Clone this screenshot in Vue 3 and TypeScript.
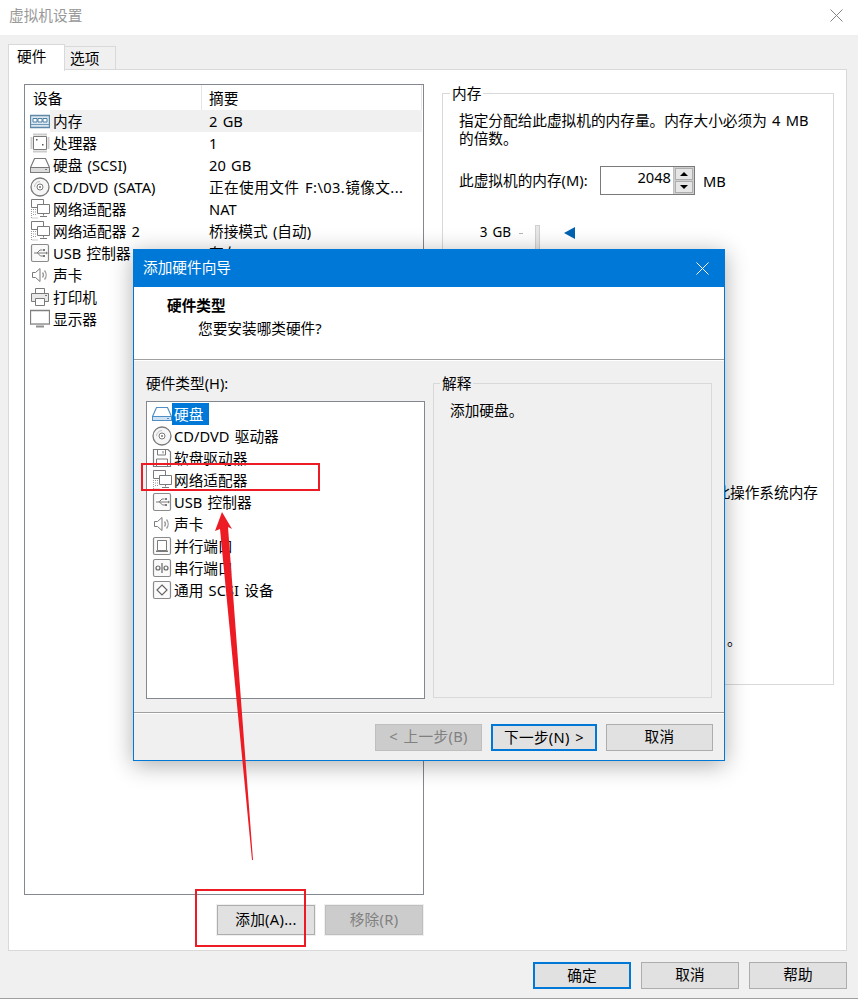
<script setup lang="ts">
interface Shape { d: string; s?: string; f?: string; w?: number; da?: string }

const G = '#7a7a7a'
const L = '#999999'
const frame = 'M3 1.500h14a1.500 1.500 0 0 1 1.500 1.500v14a1.500 1.500 0 0 1-1.500 1.500H3A1.500 1.500 0 0 1 1.500 17V3A1.500 1.500 0 0 1 3 1.500z'
const icons: Record<string, Shape[]> = {
  mem: [
    { d: 'M.5 4.500h19v12h-19z', s: '#5f87a6', f: '#dbe7f1', w: 1.300 },
    { d: 'M3 7.500h4v3.500H3zM8 7.500h4v3.500H8zM13 7.500h4v3.500h-4z', s: '#4f7fa3', f: '#ffffff' },
    { d: 'M1 13.500h18', s: '#6f97b6' }
  ],
  cpu: [
    { d: 'M3.500 3.500h13v13h-13z', s: G, f: '#fff' },
    { d: 'M4 .5v2M6 .5v2M8 .5v2M10 .5v2M12 .5v2M14 .5v2M16 .5v2M4 17.500v2M6 17.500v2M8 17.500v2M10 17.500v2M12 17.500v2M14 17.500v2M16 17.500v2M.5 5h2M.5 7h2M.5 9h2M.5 11h2M.5 13h2M.5 15h2M17.500 5h2M17.500 7h2M17.500 9h2M17.500 11h2M17.500 13h2M17.500 15h2', s: L },
    { d: 'M6 6h1.500v1.500H6zM12 11h1.500v1.500H12z', f: '#555' }
  ],
  hdd: [
    { d: 'M4.500 3.500h11l4 9v5h-19v-5z', s: G, f: '#fff', w: 1.200 },
    { d: 'M.5 12.500h19', s: G },
    { d: 'M1 13h18v4H1z', f: '#dcdcdc' },
    { d: 'M15 14.500h2', s: G }
  ],
  hddBlue: [
    { d: 'M4.500 3.500h11l4 9v4h-19v-4z', s: '#4f8fc4', f: '#fff', w: 1.200 },
    { d: 'M.5 12.500h19', s: '#4f8fc4' },
    { d: 'M1 13h18v3H1z', f: '#cfe2f3' },
    { d: 'M15 14.500h2', s: '#4f8fc4' }
  ],
  cd: [
    { d: 'M10 1a9 9 0 1 0 0 18a9 9 0 1 0 0-18z', s: G, f: '#f6f6f6', w: 1.300 },
    { d: 'M10 7a3 3 0 1 0 0 6a3 3 0 1 0 0-6z', s: G, f: '#fff' },
    { d: 'M10 9a1 1 0 1 0 0 2a1 1 0 1 0 0-2z', f: '#777' },
    { d: 'M4.500 10a5.500 5.500 0 0 1 5.500-5.500', s: '#c4c4c4' }
  ],
  net: [
    { d: 'M1.500 .5h12v8h-12z', s: G, f: '#fff' },
    { d: 'M7.500 5.500h12v9h-12z', s: G, f: '#fff' },
    { d: 'M13.500 14.500v2M10 17.500h7', s: G },
    { d: 'M1.500 10v9h7M3 10.500h3M3 13h3M3 15.500h3', s: L, da: '1 1' }
  ],
  usb: [
    { d: frame, s: '#8a8a8a', f: '#fafafa', w: 1.200 },
    { d: 'M4 10h12M7 10l3-3h2.500M7.500 10l3 3h2.500', s: G },
    { d: 'M13 6h2v2h-2zM13 12h2v2h-2z', f: G },
    { d: 'M16 8.500l2 1.500-2 1.500z', f: G }
  ],
  sound: [
    { d: 'M2.500 7.500h3l4.500-4v13l-4.500-4h-3z', s: G, f: '#fff' },
    { d: 'M12.500 7.500a4 4 0 0 1 0 5M14.500 5.500a7 7 0 0 1 0 9', s: L, w: 1.300 }
  ],
  printer: [
    { d: 'M5.500 1.500h9v5h-9z', s: G, f: '#fff' },
    { d: 'M1.500 6.500h17v8h-17z', s: G, f: '#e9e9e9' },
    { d: 'M5.500 11.500h9v7h-9z', s: G, f: '#fff' },
    { d: 'M15 8.500h2', s: G }
  ],
  monitor: [
    { d: 'M.5 1.500h19v13.500H.5z', s: '#808080', f: '#fff', w: 1.300 },
    { d: 'M1 14h18v1.500H1z', f: '#b0b0b0' },
    { d: 'M6 17.500h8', s: '#909090', w: 2 }
  ],
  floppy: [
    { d: 'M1.500 1.500h14.500l2.500 2.500v14.500h-17z', s: G, f: '#fff', w: 1.200 },
    { d: 'M5.500 1.500v5.500h8v-5.500M11 3v2.500', s: G },
    { d: 'M4.500 18.500v-7.500h11v7.500', s: G }
  ],
  parallel: [
    { d: frame, s: '#8a8a8a', f: '#fafafa', w: 1.200 },
    { d: 'M5.500 4.500h9v10h-9z', s: G, f: '#fff' },
    { d: 'M4 14.500h12v1.500H4z', f: G }
  ],
  serial: [
    { d: frame, s: '#8a8a8a', f: '#fafafa', w: 1.200 },
    { d: 'M6 8a2 2 0 1 0 0 4a2 2 0 1 0 0-4zM14 8a2 2 0 1 0 0 4a2 2 0 1 0 0-4zM10 5v10', s: '#666', w: 1.200 }
  ],
  scsi: [
    { d: frame, s: '#8a8a8a', f: '#fafafa', w: 1.200 },
    { d: 'M10 5l5 5-5 5-5-5z', s: '#666', f: '#fff', w: 1.200 }
  ]
}

const devices = [
  { icon: 'mem', name: '内存', summary: '2 GB', selected: true },
  { icon: 'cpu', name: '处理器', summary: '1' },
  { icon: 'hdd', name: '硬盘 (SCSI)', summary: '20 GB' },
  { icon: 'cd', name: 'CD/DVD (SATA)', summary: '正在使用文件 F:\\03.镜像文...', long: true },
  { icon: 'net', name: '网络适配器', summary: 'NAT' },
  { icon: 'net', name: '网络适配器 2', summary: '桥接模式 (自动)' },
  { icon: 'usb', name: 'USB 控制器', summary: '存在' },
  { icon: 'sound', name: '声卡', summary: '自动检测' },
  { icon: 'printer', name: '打印机', summary: '存在' },
  { icon: 'monitor', name: '显示器', summary: '自动检测' }
]

const hardware = [
  { icon: 'hddBlue', name: '硬盘', selected: true },
  { icon: 'cd', name: 'CD/DVD 驱动器' },
  { icon: 'floppy', name: '软盘驱动器' },
  { icon: 'net', name: '网络适配器' },
  { icon: 'usb', name: 'USB 控制器' },
  { icon: 'sound', name: '声卡' },
  { icon: 'parallel', name: '并行端口' },
  { icon: 'serial', name: '串行端口' },
  { icon: 'scsi', name: '通用 SCSI 设备' }
]
</script>

<template>
  <div class="app">
    <header class="title">
      <span>虚拟机设置</span>
      <svg class="close" width="13" height="13" viewBox="0 0 13 13"><path d="M.5.500l12 12M12.500.500l-12 12" stroke="#858585" fill="none" /></svg>
    </header>

    <main class="body">
      <div class="tabs">
        <div class="tab active">硬件</div>
        <div class="tab">选项</div>
      </div>

      <section class="panel">
        <div class="left">
          <div class="list">
            <div class="list-head">
              <div class="head-a">设备</div>
              <div class="head-b">摘要</div>
            </div>
            <div v-for="d in devices" :key="d.name" class="dev-row">
              <svg class="icon" width="20" height="20" viewBox="0 0 20 20">
                <path v-for="(p, i) in icons[d.icon]" :key="i" :d="p.d" :stroke="p.s || 'none'" :fill="p.f || 'none'" :stroke-width="p.w || 1" :stroke-dasharray="p.da" />
              </svg>
              <div class="cells" :class="{ sel: d.selected }">
                <span class="dev-name">{{ d.name }}</span>
                <span :class="{ long: d.long }">{{ d.summary }}</span>
              </div>
            </div>
          </div>
          <div class="list-btns">
            <button class="btn add">添加(A)...</button>
            <button class="btn remove" disabled>移除(R)</button>
          </div>
        </div>

        <div class="right">
          <div class="group">
            <div class="legend">内存</div>
            <p class="intro">指定分配给此虚拟机的内存量。内存大小必须为 4 MB 的倍数。</p>
            <div class="spin-row">
              <span class="spin-label">此虚拟机的内存(M):</span>
              <div class="spin">
                <span class="spin-val">2048</span>
                <div class="spin-btns">
                  <div class="spin-btn"><i class="tri up"></i></div>
                  <div class="spin-btn"><i class="tri down"></i></div>
                </div>
              </div>
              <span class="unit">MB</span>
            </div>
            <div class="slider-row">
              <span class="gb">3 GB</span>
              <i class="tick"></i>
              <i class="track"></i>
              <i class="marker"></i>
            </div>
            <div class="note">此操作系统内存</div>
            <div class="dot">。</div>
          </div>
        </div>
      </section>

      <footer class="foot">
        <button class="btn wide primary">确定</button>
        <button class="btn wide">取消</button>
        <button class="btn wide">帮助</button>
      </footer>
    </main>

    <div class="dialog">
      <div class="d-title">
        <span>添加硬件向导</span>
        <svg width="13" height="13" viewBox="0 0 13 13"><path d="M.5.500l12 12M12.500.500l-12 12" stroke="#fff" fill="none" /></svg>
      </div>
      <div class="d-head">
        <div class="d-h1">硬件类型</div>
        <div class="d-h2">您要安装哪类硬件?</div>
      </div>
      <div class="d-main">
        <div class="d-left">
          <div class="d-label">硬件类型(H):</div>
          <div class="d-list">
            <div v-for="h in hardware" :key="h.name" class="hw-row">
              <svg class="icon" width="20" height="20" viewBox="0 0 20 20">
                <path v-for="(p, i) in icons[h.icon]" :key="i" :d="p.d" :stroke="p.s || 'none'" :fill="p.f || 'none'" :stroke-width="p.w || 1" :stroke-dasharray="p.da" />
              </svg>
              <span class="hw-name" :class="{ on: h.selected }">{{ h.name }}</span>
            </div>
          </div>
        </div>
        <div class="d-explain">
          <div class="d-legend">解释</div>
          <div class="d-text">添加硬盘。</div>
        </div>
      </div>
      <div class="d-foot">
        <button class="btn d-btn remove" disabled>&lt; 上一步(B)</button>
        <button class="btn d-btn next primary">下一步(N) &gt;</button>
        <button class="btn d-btn">取消</button>
      </div>
    </div>

    <svg class="marks" width="858" height="999" viewBox="0 0 858 999">
      <rect x="142" y="464" width="177" height="26" fill="none" stroke="#ed1c24" stroke-width="2" />
      <rect x="196" y="890" width="109" height="56" fill="none" stroke="#ed1c24" stroke-width="2" />
      <path d="M222 512L232 529L228 527L253 860L252 860L220 529L215 531Z" fill="#ed1c24" />
    </svg>
  </div>
</template>

<style scoped>
.app {
  position: relative;
  width: 858px;
  height: 999px;
  overflow: hidden;
  display: flex;
  flex-direction: column;
  box-sizing: border-box;
  border-bottom: 1px solid #a0a0a0;
  background: #f0f0f0;
  font-family: "Noto Sans", "Noto Sans CJK SC", sans-serif;
  font-size: 14.67px;
  line-height: 22px;
  word-spacing: 1.500px;
  color: #000;
}
.title {
  height: 35px;
  flex: none;
  background: #fff;
  padding: 0 15px 0 9px;
  display: flex;
  align-items: center;
  justify-content: space-between;
  color: #999;
}
.close { margin-top: -5px; }
.title span { margin-top: -6px; }
.body {
  flex: 1;
  padding: 9px 11px 0 8px;
  display: flex;
  flex-direction: column;
}
.tabs {
  height: 25px;
  display: flex;
  align-items: flex-start;
  flex: none;
}
.tab {
  box-sizing: border-box;
  height: 24px;
  width: 51px;
  margin-top: 2px;
  padding-left: 5px;
  border: 1px solid #d9d9d9;
  border-left: none;
  line-height: 22px;
}
.tab.active {
  position: relative;
  z-index: 1;
  height: 27px;
  width: 57px;
  margin-top: 0;
  padding-left: 8px;
  background: #fff;
  border-left: 1px solid #d9d9d9;
  border-bottom: none;
}
.panel {
  box-sizing: border-box;
  height: 882px;
  flex: none;
  display: flex;
  background: #fff;
  border: 1px solid #d9d9d9;
  padding: 14px 13px 15px 15px;
}
.left {
  width: 400px;
  flex: none;
  display: flex;
  flex-direction: column;
}
.list {
  flex: 1;
  border: 1px solid #828790;
  padding-right: 1px;
}
.list-head {
  display: flex;
  height: 25px;
  line-height: 26px;
}
.head-a {
  width: 177px;
  box-sizing: border-box;
  padding-left: 8px;
  border-right: 1px solid #e5e5e5;
}
.head-b {
  flex: 1;
  padding-left: 7px;
  border-right: 1px solid #e5e5e5;
}
.dev-row {
  display: flex;
  align-items: center;
  height: 22px;
  padding-left: 5px;
}
.icon { flex: none; }
.cells {
  flex: 1;
  display: flex;
  height: 22px;
  padding-left: 3px;
}
.cells.sel { background: #f0f0f0; }
.dev-name { width: 156px; flex: none; }
.long { letter-spacing: 0.400px; }
.list-btns {
  display: flex;
  justify-content: flex-end;
  gap: 10px;
  margin-top: 10px;
  padding-right: 1px;
  flex: none;
}
.btn {
  box-sizing: border-box;
  font: inherit;
  word-spacing: inherit;
  color: #000;
  background: #e1e1e1;
  border: 1px solid #adadad;
  padding: 0 0 3px;
  display: block;
}
.btn.primary { border: 2px solid #0078d7; }
.btn.remove {
  background: #cccccc;
  color: #808080;
  border-color: #bfbfbf;
}
.add, .list-btns .remove {
  width: 98px;
  height: 30px;
  box-shadow: 0 0 0 1px #f0f0f0;
  letter-spacing: 0.300px;
}
.right {
  flex: 1;
  margin-left: 18px;
  padding-top: 9px;
}
.group {
  box-sizing: border-box;
  height: 592px;
  width: 392px;
  border: 1px solid #d9d9d9;
  padding: 0 15px 0 16px;
}
.legend {
  width: fit-content;
  margin: -10px 0 0 -9px;
  padding: 0 2px;
  background: #fff;
  height: 18px;
  line-height: 18px;
}
.intro {
  margin: 9px 0 0;
  width: 360px;
  line-height: 18px;
}
.spin-row {
  display: flex;
  align-items: center;
  height: 29px;
  margin-top: 19px;
}
.spin-label { width: 141px; flex: none; padding-bottom: 2px; }
.spin {
  box-sizing: border-box;
  width: 95px;
  height: 29px;
  display: flex;
  border: 1px solid #7a7a7a;
}
.spin-val {
  flex: 1;
  text-align: right;
  padding-right: 2px;
  line-height: 21px;
}
.spin-btns {
  width: 21px;
  display: flex;
  flex-direction: column;
  gap: 1px;
  background: #cfcfcf;
  padding: 1px;
  box-sizing: border-box;
  border-left: 1px solid #c0c0c0;
}
.spin-btn {
  flex: 1;
  background: #e6e6e6;
  border: 1px solid #adadad;
  display: flex;
  align-items: center;
  justify-content: center;
}
.tri {
  width: 0;
  height: 0;
  border-left: 4px solid transparent;
  border-right: 4px solid transparent;
}
.tri.up { border-bottom: 4px solid #000; }
.tri.down { border-top: 4px solid #000; }
.unit { margin-left: 8px; }
.slider-row {
  display: flex;
  height: 60px;
  margin-top: 30px;
}
.gb {
  width: 52px;
  text-align: right;
  line-height: 15px;
  font-size: 13.500px;
}
.tick {
  width: 4px;
  height: 1px;
  background: #b5b5b5;
  margin: 8px 0 0 8px;
}
.track {
  width: 5px;
  height: 60px;
  margin-left: 12px;
  background: #e7e7e7;
  border: 1px solid #d0d0d0;
  box-sizing: border-box;
}
.marker {
  width: 0;
  height: 0;
  margin: 2px 0 0 24px;
  border-top: 6px solid transparent;
  border-bottom: 6px solid transparent;
  border-right: 11px solid #0063b1;
}
.note {
  margin-top: 198px;
  height: 18px;
  line-height: 18px;
  text-align: right;
}
.dot {
  margin: 129px 0 0 268px;
  height: 18px;
  line-height: 18px;
}
.foot {
  display: flex;
  justify-content: flex-end;
  gap: 10px;
  margin-top: 11px;
  flex: none;
}
.wide {
  width: 98px;
  height: 27px;
}
.dialog {
  position: absolute;
  left: 133px;
  top: 249px;
  width: 592px;
  height: 512px;
  box-sizing: border-box;
  border: 1px solid #0078d7;
  background: #f0f0f0;
  box-shadow: 0 4px 22px rgba(0, 0, 0, 0.32);
  display: flex;
  flex-direction: column;
}
.d-title {
  height: 37px;
  flex: none;
  background: #0078d7;
  color: #fff;
  padding: 0 15px 0 9px;
  display: flex;
  align-items: center;
  justify-content: space-between;
}
.d-title span { margin-top: -3px; }
.d-head {
  height: 72px;
  flex: none;
  background: #fff;
  border-bottom: 1px solid #a0a0a0;
  box-shadow: 0 1px 0 #fff;
  padding-left: 33px;
  box-sizing: content-box;
}
.d-h1 {
  font-weight: 700;
  margin-top: 7px;
}
.d-h2 {
  margin-top: 1px;
  padding-left: 31px;
}
.d-main {
  flex: 1;
  display: flex;
  padding: 0 12px 0 12px;
  gap: 8px;
  min-height: 0;
}
.d-left {
  width: 279px;
  flex: none;
}
.d-label {
  margin: 12px 0 0 0;
  height: 22px;
  margin-bottom: 7px;
}
.d-list {
  box-sizing: border-box;
  height: 298px;
  background: #fff;
  border: 1px solid #828790;
  padding: 1px 0 0 5px;
}
.hw-row {
  display: flex;
  align-items: center;
  height: 22px;
}
.hw-name {
  padding: 0 6px 0 2px;
  height: 22px;
}
.hw-name.on {
  background: #0078d7;
  color: #fff;
}
.d-explain {
  flex: 1;
  box-sizing: border-box;
  height: 315px;
  margin-top: 23px;
  border: 1px solid #d9d9d9;
}
.d-legend {
  width: fit-content;
  margin: -10px 0 0 6px;
  padding: 0 2px;
  background: #f0f0f0;
  height: 18px;
  line-height: 18px;
}
.d-text {
  margin: 9px 0 0 16px;
  line-height: 18px;
}
.d-foot {
  height: 48px;
  flex: none;
  box-sizing: border-box;
  border-top: 1px solid #a0a0a0;
  box-shadow: inset 0 1px 0 #fff;
  padding: 11px 11px 0 0;
  display: flex;
  justify-content: flex-end;
  gap: 9px;
}
.d-btn {
  width: 107px;
  height: 27px;
  letter-spacing: 0.300px;
}
.d-btn.next { width: 106px; }
.marks {
  position: absolute;
  left: 0;
  top: 0;
  pointer-events: none;
}
</style>
